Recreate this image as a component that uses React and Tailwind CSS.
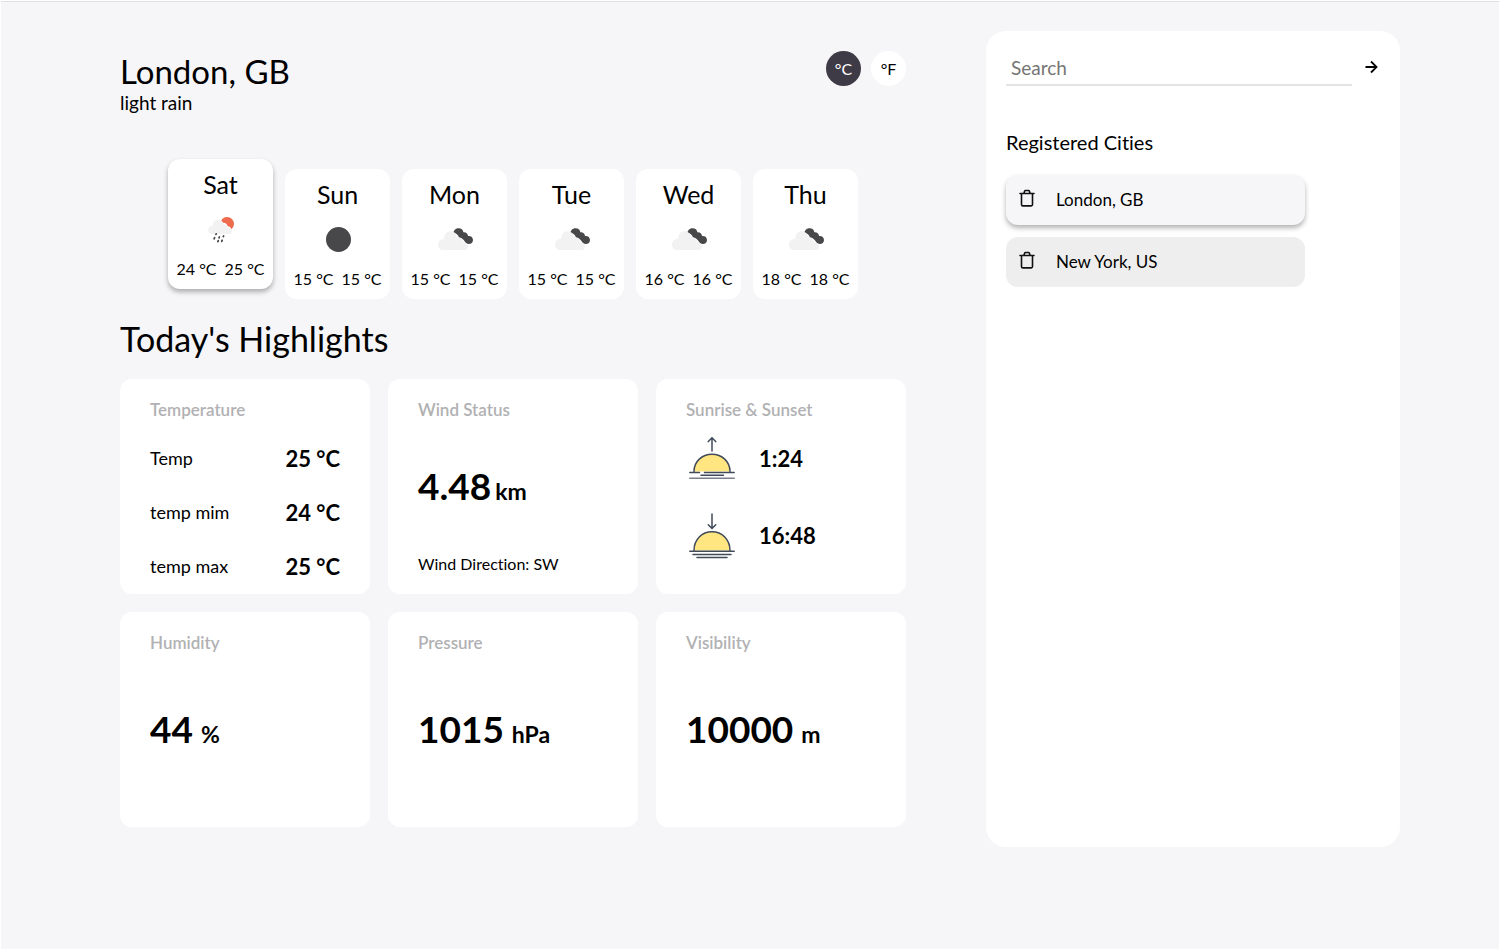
import React, { useState } from 'react';
import { BiRightArrowAlt } from 'react-icons/bi';

const days = [
  { name: 'Sat', icon: 'rain', min: 24, max: 25 },
  { name: 'Sun', icon: 'clear', min: 15, max: 15 },
  { name: 'Mon', icon: 'clouds', min: 15, max: 15 },
  { name: 'Tue', icon: 'clouds', min: 15, max: 15 },
  { name: 'Wed', icon: 'clouds', min: 16, max: 16 },
  { name: 'Thu', icon: 'clouds', min: 18, max: 18 },
];

const temperatures = [
  { label: 'Temp', value: '25 °C' },
  { label: 'temp mim', value: '24 °C' },
  { label: 'temp max', value: '25 °C' },
];

const cities = ['London, GB', 'New York, US'];

function WeatherIcon({ type }) {
  return (
    <svg viewBox="0 0 50 50" className="size-[50px]" aria-hidden="true">
      {type === 'clear' && <circle cx="25.5" cy="25.5" r="12.5" fill="#48484a" />}
      {type === 'clouds' && (
        <g transform="translate(1 1)">
          <path
            d="M22.5 17.5C22.6 15.3 24.9 13.2 27.7 13.2C30.2 13.2 32 14.8 32.4 17.2C34.8 16.9 36.8 18.4 37.1 21C39.7 20.6 42 22.3 42 25C42 27.6 40 29.1 38 29.1C35.9 29.1 34.5 28.2 33.8 26.6C32.4 24.2 30.6 22.4 28 22.4C27 19.8 25.2 18.1 22.5 17.5Z"
            fill="#48484a"
          />
          <path
            d="M12 35C9 35 7 32.4 7 29.5C7 26.3 9.5 23.9 13.1 24.1C13 19.7 15.6 16.2 19.5 16.2C23 16.2 25.6 18.6 26 22.4C29.5 22 31.8 24.6 32.2 27.6C35 27.2 37 29 37 31.5C37 33.7 35.6 35 33.6 35Z"
            fill="#f2f2f2"
          />
        </g>
      )}
      {type === 'rain' && (
        <g transform="translate(-1 0)">
          <path
            d="M26.3 16.6C27.3 14.3 29.4 13 32 13C35.9 13 39 16 39 19.8C39 22 38 24 36.3 25.2C35.8 23.4 34.5 22.4 32.7 22.3C32 19.8 30.4 18.6 28.2 18.8Z"
            fill="#ee6c4d"
          />
          <path
            d="M17 30C14.7 30 13 28.2 13 26C13 23.3 15 21.6 17.8 21.8C17.8 18.4 20 15.8 23 15.8C25.8 15.8 27.7 17.6 28 20.4C30.6 19.8 32.4 21.5 32.6 23.8C35.3 23.4 37 24.9 37 26.9C37 28.9 35.6 30 33.6 30Z"
            fill="#f2f2f2"
          />
          <path
            d="M21.2 29.8L20.9 30.4M19.6 33.6L19.1 34.8M24.4 33L24 33.8M28.6 32L28.3 32.6M23.3 36.6L22.8 37.6M27.2 36.2L26.7 37.4"
            stroke="#48484a"
            strokeWidth="1.7"
            strokeLinecap="round"
            fill="none"
          />
        </g>
      )}
    </svg>
  );
}

function SunriseIcon() {
  return (
    <svg viewBox="0 0 50 50" className="size-[50px]" aria-hidden="true" fill="none" stroke="#414b5a" strokeWidth="1.5" strokeLinecap="round" strokeLinejoin="round">
      <path d="M7 38.5C7 28.5 15 21.2 25 21.2S43 28.5 43 38.5Z" fill="#ffe680" stroke="none" />
      <path d="M7 38.5C7 28.5 15 21.2 25 21.2S43 28.5 43 38.5" />
      <path d="M25 18V4.8M21.3 8.6L25 4.8L28.7 8.6" />
      <path d="M2.8 39.4H12.5M17.5 39.4H47.2M14 42.2H36.5" />
      <path d="M2.8 45.2H47.2" stroke="#7a818c" />
    </svg>
  );
}

function SunsetIcon() {
  return (
    <svg viewBox="0 0 50 50" className="size-[50px]" aria-hidden="true" fill="none" stroke="#414b5a" strokeWidth="1.5" strokeLinecap="round" strokeLinejoin="round">
      <path d="M7 40.5C7 29.5 15 21.8 25 21.8S43 29.5 43 40.5Z" fill="#ffe680" stroke="none" />
      <path d="M7 40.5C7 29.5 15 21.8 25 21.8S43 29.5 43 40.5" />
      <path d="M25 4V18.6M21.3 14.8L25 18.6L28.7 14.8" />
      <path d="M2.8 41.2H47.2M6 44.4H44M10 47.6H40" />
    </svg>
  );
}

function TrashIcon() {
  return (
    <svg viewBox="0 0 20 20" className="size-5" aria-hidden="true" fill="none" stroke="#111" strokeWidth="1.6" strokeLinecap="round" strokeLinejoin="round">
      <path d="M3 5.5H17M4.5 5.5V16.5A1.4 1.4 0 0 0 5.9 17.9H14.1A1.4 1.4 0 0 0 15.5 16.5V5.5M7 5L7.6 3.2A1 1 0 0 1 8.5 2.5H11.5A1 1 0 0 1 12.4 3.2L13 5" />
    </svg>
  );
}

function Card({ title, children }) {
  return (
    <article className="min-h-[215px] rounded-xl bg-white px-[30px] pt-[21px]">
      <h3 className="text-[17px] leading-5 font-semibold text-[#b1b1b3]">{title}</h3>
      {children}
    </article>
  );
}

function Measure({ value, unit }) {
  return (
    <p className="mt-[54px] flex items-baseline gap-2 font-bold">
      <span className="text-[37px] leading-11">{value}</span>
      <span className="text-[23px] leading-11">{unit}</span>
    </p>
  );
}

export default function App() {
  const [unit, setUnit] = useState('C');
  const [city, setCity] = useState(cities[0]);
  const [query, setQuery] = useState('');

  return (
    <div className="min-h-screen border border-white bg-[#f6f6f8] font-['Lato','Open_Sans',sans-serif] text-black [font-variant-ligatures:none]">
      <div className="flex items-stretch gap-20 border-t border-[#dfe0e3] pt-[29px] pr-[99px] pb-20 pl-[119px]">
        <main className="min-w-0 flex-1 pt-5 pb-5">
          <header className="flex items-start justify-between">
            <div>
              <h1 className="text-[33px] leading-10">London, GB</h1>
              <p className="text-[19px] leading-6">light rain</p>
            </div>
            <div className="flex gap-2.5">
              {['C', 'F'].map((u) => (
                <button
                  key={u}
                  type="button"
                  aria-pressed={unit === u}
                  onClick={() => setUnit(u)}
                  className={`size-[35px] rounded-full text-base ${unit === u ? 'bg-[#3f3b46] text-white' : 'bg-white text-black'}`}
                >
                  °{u}
                </button>
              ))}
            </div>
          </header>

          <section aria-label="Forecast" className="mt-11 flex items-start justify-center gap-3">
            {days.map((d, i) => (
              <article
                key={d.name}
                className={`flex h-[130px] w-[105px] flex-col items-center rounded-xl bg-white py-2.5 ${i === 0 ? 'shadow-[0_3px_5px_rgba(0,0,0,0.3)]' : 'mt-2.5'}`}
              >
                <h2 className="text-[25px] leading-[30px]">{d.name}</h2>
                <div className="flex flex-1 items-center">
                  <WeatherIcon type={d.icon} />
                </div>
                <p className="flex gap-2 text-base leading-5">
                  <span>{d.min} °C</span>
                  <span>{d.max} °C</span>
                </p>
              </article>
            ))}
          </section>

          <section className="mt-[18px]">
            <h2 className="text-[34px] leading-11">Today's Highlights</h2>
            <div className="mt-[18px] grid grid-cols-3 gap-[18px]">
              <Card title="Temperature">
                <dl className="mt-[11px]">
                  {temperatures.map((t) => (
                    <div key={t.label} className="flex h-[54px] items-center justify-between">
                      <dt className="text-lg">{t.label}</dt>
                      <dd className="text-[22px] font-bold">{t.value}</dd>
                    </div>
                  ))}
                </dl>
              </Card>
              <Card title="Wind Status">
                <p className="mt-11 flex items-baseline gap-1 font-bold">
                  <span className="text-[37px] leading-11">4.48</span>
                  <span className="text-[23px] leading-11">km</span>
                </p>
                <p className="mt-[41px] text-base leading-5">Wind Direction: SW</p>
              </Card>
              <Card title="Sunrise & Sunset">
                <div className="mt-[13px] flex flex-col gap-[27px] pl-px text-[22px] font-bold">
                  <p className="flex items-center gap-[22px]">
                    <SunriseIcon />
                    1:24
                  </p>
                  <p className="flex items-center gap-[22px]">
                    <SunsetIcon />
                    16:48
                  </p>
                </div>
              </Card>
              <Card title="Humidity">
                <Measure value="44" unit="%" />
              </Card>
              <Card title="Pressure">
                <Measure value="1015" unit="hPa" />
              </Card>
              <Card title="Visibility">
                <Measure value="10000" unit="m" />
              </Card>
            </div>
          </section>
        </main>

        <aside className="w-[414px] shrink-0 rounded-[20px] bg-white pt-[19px] pr-[18px] pl-5">
          <form className="flex items-start" onSubmit={(e) => e.preventDefault()}>
            <input
              type="text"
              aria-label="Search"
              placeholder="Search"
              value={query}
              onChange={(e) => setQuery(e.target.value)}
              className="h-9 min-w-0 flex-1 border-b-2 border-[#e4e4e4] px-[5px] text-[19px] outline-none placeholder:text-[#757575]"
            />
            <button type="submit" aria-label="Add city" className="flex h-[34px] w-[30px] items-center justify-end">
              <BiRightArrowAlt className="size-[22px]" />
            </button>
          </form>

          <h2 className="mt-[43px] text-xl leading-[26px]">Registered Cities</h2>
          <ul className="mt-5 flex w-[299px] flex-col gap-3">
            {cities.map((c) => (
              <li
                key={c}
                className={`flex h-[50px] items-center gap-[19px] rounded-xl pl-[11px] ${c === city ? 'bg-[#f6f6f8] shadow-[0_3px_5px_rgba(0,0,0,0.3)]' : 'bg-[#eeeeee]'}`}
              >
                <button type="button" aria-label={`Remove ${c}`} className="pb-1">
                  <TrashIcon />
                </button>
                <button type="button" onClick={() => setCity(c)} className="flex-1 text-left text-[17px] leading-5">
                  {c}
                </button>
              </li>
            ))}
          </ul>
        </aside>
      </div>
    </div>
  );
}
